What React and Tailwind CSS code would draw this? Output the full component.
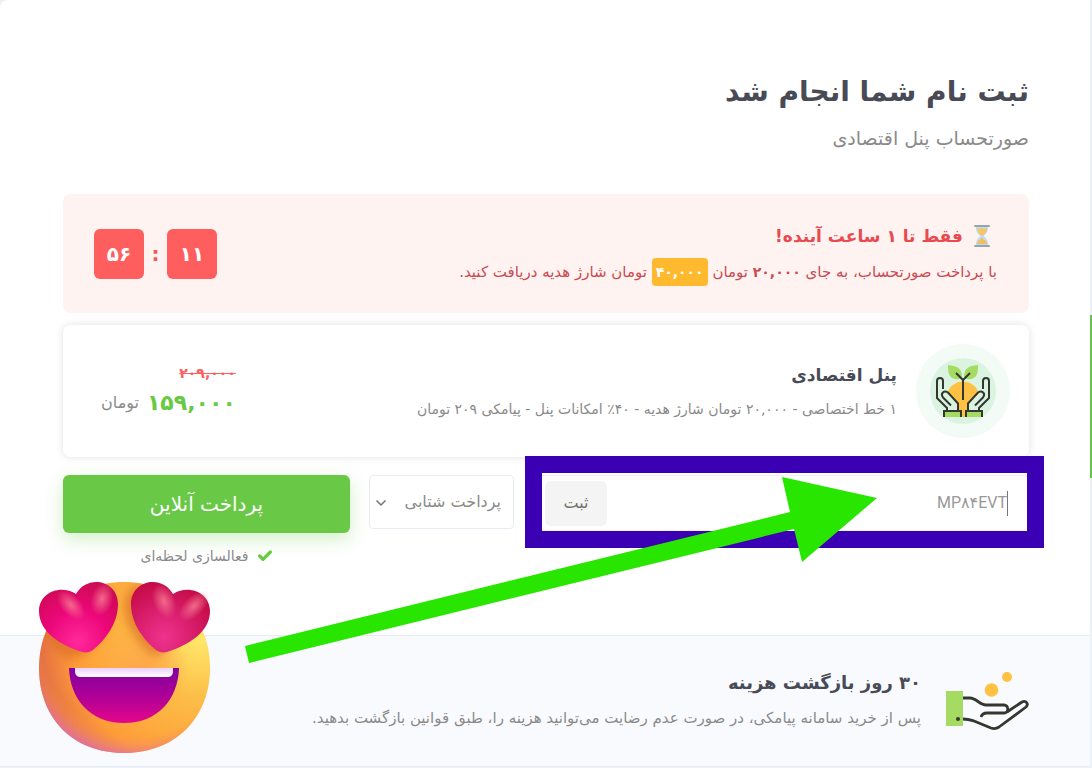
import { useState } from "react";
import { Check, ChevronDown } from "lucide-react";

const Hourglass = () => (
    <svg width="22" height="24" viewBox="0 0 22 24" aria-hidden="true">
        <path d="M5 3h12c0 4-1 6-4.500 9C16 15 17 17 17 21H5c0-4 1-6 4.500-9C6 9 5 7 5 3z" fill="#b9def5" />
        <path d="M6 5c2-1 8-1 10 0-.4 3-2 5-5 7-3-2-4.600-4-5-7z" fill="#f5c566" />
        <path d="M11 13c.5 2 5 3.500 5 7H6c0-3.500 4.500-5 5-7z" fill="#f3bd62" />
        <rect x="3" y="1" width="16" height="2" rx="1" fill="#9aa3a8" />
        <rect x="3" y="21" width="16" height="2" rx="1" fill="#9aa3a8" />
    </svg>
);

const PlanIcon = () => (
    <svg className="shrink-0" width="94" height="94" viewBox="0 0 94 94" aria-hidden="true">
        <circle cx="47" cy="47" r="47" fill="#f2fbf5" />
        <circle cx="47" cy="47" r="33" fill="#dbf4e1" />
        <path d="M31 50A16.500 16.500 0 0 1 63 50C64 58 51 62 51 73h-8C43 62 30 58 31 50z" fill="#ffc143" />
        <path d="M32 21c9 1 14 3 14 12 0 2-8 4-12-1-2-3-2-7-2-11z" fill="#a5db63" />
        <path d="M62 21c-9 1-14 3-14 12 0 2 8 4 12-1 2-3 2-7 2-11z" fill="#a5db63" />
        <path d="M28 67h17v6H28zM50 67h17v6H50z" fill="#a5db63" />
        <path d="M28 66l-7-12V38l6 0v10l2 0 13 10v8zM66 66l7-12V38l-6 0v10l-2 0-13 10v8z" fill="#dbf4e1" />
        <g fill="none" stroke="#32382f" strokeWidth="2">
            <path d="M47 56V36l-7-7M47 36l7-7" />
            <path d="M28 73v-6h17v6M31 67v-3L21 54V37c0-4 6-4 6 0v8M42 67v-7.500L32 48.500c-4-2.500-8 1-5 5l8 8" />
            <path d="M66 73v-6H50v6M63 67v-3l10-10V37c0-4-6-4-6 0v8M52 67v-7.500L62 48.500c4-2.500 8 1 5 5l-8 8" />
        </g>
    </svg>
);

const RefundIcon = () => (
    <svg className="shrink-0" width="84" height="60" viewBox="0 0 84 60" aria-hidden="true">
        <path d="M1 20h17v35H1z" fill="#a5db63" />
        <circle cx="13" cy="48" r="2" fill="#32382f" />
        <circle cx="46.500" cy="19" r="6.800" fill="#ffc143" />
        <circle cx="62" cy="6" r="5" fill="#ffc143" />
        <g fill="none" stroke="#32382f" strokeWidth="2.800" strokeLinejoin="round">
            <path d="M18 27h7c6 0 10 7 16 7h18c5 0 5 8 0 8H42c-3 0-5 1-6 4" />
            <path d="M62 41l15-10c4-2 7 2 4 5L54 56c-3 2-5 2-8 1l-17-7c-3-1-5-2-11-2" />
        </g>
    </svg>
);

const LoveFace = () => (
    <svg className="pointer-events-none absolute left-[38px] top-[581px]" width="173" height="173" viewBox="0 0 173 173" aria-hidden="true">
        <defs>
            <radialGradient id="face" cx="0.94" cy="0.34" r="0.98">
                <stop offset="0" stopColor="#ffe76a" />
                <stop offset="0.35" stopColor="#fcbd47" />
                <stop offset="0.75" stopColor="#ff9d38" />
                <stop offset="1" stopColor="#dd6548" />
            </radialGradient>
            <radialGradient id="chin" gradientUnits="userSpaceOnUse" cx="100" cy="55" r="125">
                <stop offset="0.78" stopColor="#ff9d38" stopOpacity="0" />
                <stop offset="0.97" stopColor="#e070a8" stopOpacity="0.9" />
            </radialGradient>
            <radialGradient id="cheek" gradientUnits="userSpaceOnUse" cx="105" cy="90" r="45">
                <stop offset="0" stopColor="#ffa54b" />
                <stop offset="1" stopColor="#ffa54b" stopOpacity="0" />
            </radialGradient>
            <radialGradient id="heartLeft" gradientUnits="userSpaceOnUse" cx="40" cy="60" r="62">
                <stop offset="0" stopColor="#ff2a9c" />
                <stop offset="0.5" stopColor="#ec077a" />
                <stop offset="1" stopColor="#cc0a50" />
            </radialGradient>
            <radialGradient id="heartRight" gradientUnits="userSpaceOnUse" cx="126" cy="56" r="56">
                <stop offset="0" stopColor="#ef338e" />
                <stop offset="0.5" stopColor="#d91e6d" />
                <stop offset="1" stopColor="#c40a45" />
            </radialGradient>
            <radialGradient id="shine">
                <stop offset="0" stopColor="#f87893" stopOpacity="0.85" />
                <stop offset="1" stopColor="#f87893" stopOpacity="0" />
            </radialGradient>
            <linearGradient id="mouth" x1="0" y1="0" x2="0" y2="1">
                <stop offset="0" stopColor="#8200a0" />
                <stop offset="0.5" stopColor="#ac0096" />
                <stop offset="1" stopColor="#e5068b" />
            </linearGradient>
            <linearGradient id="teeth" x1="0" y1="0" x2="0" y2="1">
                <stop offset="0" stopColor="#eccfff" />
                <stop offset="1" stopColor="#ffffff" />
            </linearGradient>
            <filter id="soft" x="-30%" y="-30%" width="160%" height="160%">
                <feGaussianBlur stdDeviation="5" />
            </filter>
            <clipPath id="head">
                <path d="M86 1C138 1 172 38 172 87s-34 85-86 85S1 136 1 87 34 1 86 1z" />
            </clipPath>
        </defs>
        <g clipPath="url(#head)">
            <rect width="173" height="173" fill="url(#face)" />
            <rect width="173" height="173" fill="url(#cheek)" />
            <rect width="173" height="173" fill="url(#chin)" />
            <g fill="#d96b25" opacity="0.65" filter="url(#soft)">
                <path d="M30 14C48 6 70 2 72 23c0 22-14 42-29 52-5 4-12 3-17 1C14 66 1 52 1 30z" />
                <path d="M131 13C117-6 88 0 86 23c0 22 13 38 25 49 5 4 10 3 16 0z" />
            </g>
        </g>
        <path d="M38 13C49-7 80-1 80 23c0 20-13 36-25 46-4 3-9 3-14 1C24 64 1 52 1 30 1 12 22 3 38 13z" fill="url(#heartLeft)" />
        <path d="M135 13C124-7 93-1 93 23c0 20 13 36 25 46 4 3 9 3 14 1C149 64 172 52 172 30 172 12 151 3 135 13z" fill="url(#heartRight)" />
        <ellipse cx="33" cy="24" rx="10" ry="18" fill="url(#shine)" transform="rotate(-42 33 24)" />
        <ellipse cx="64" cy="18" rx="11" ry="17" fill="url(#shine)" transform="rotate(15 64 18)" />
        <ellipse cx="126" cy="20" rx="11" ry="18" fill="url(#shine)" transform="rotate(-20 126 20)" />
        <ellipse cx="156" cy="25" rx="10" ry="19" fill="url(#shine)" transform="rotate(45 156 25)" />
        <path d="M31 87h110c-1 32-22 55-55 55S32 119 31 87z" fill="url(#mouth)" />
        <path d="M37 87h98v3c0 4-2 6-6 6H43c-4 0-6-2-6-6z" fill="url(#teeth)" />
    </svg>
);

const Arrow = () => (
    <svg className="pointer-events-none absolute left-[245px] top-[477px]" width="633" height="187" viewBox="0 0 633 187" aria-hidden="true">
        <path d="M0 169L545 35 537 0 632 21 557 85 549 52 4 186z" fill="#28e600" />
    </svg>
);

const countdown = ["۱۱", "۵۶"];

export default function App() {
    const [code, setCode] = useState("MP۸۴EVT");
    const [gateway, setGateway] = useState("shetab");

    return (
        <div dir="rtl" className="relative min-h-screen overflow-hidden bg-[#edf1f8] pr-[2px] font-['DejaVu_Sans',sans-serif] text-[#8a8a8a]">
            <div className="absolute right-0 top-[315px] h-[163px] w-[2px] bg-[#67c24c]" />

            <main className="rounded-tl-lg bg-white">
                <div className="pt-[66px] pr-[61px] pb-16 pl-[63px]">
                    <header className="mb-10">
                        <h1 className="text-[28px] leading-[52px] font-bold text-[#484b56]">ثبت نام شما انجام شد</h1>
                        <p className="mt-1 text-[19px] leading-[32px]">صورتحساب پنل اقتصادی</p>
                    </header>

                    <section className="flex min-h-[119px] items-center justify-between rounded-lg bg-[#fff3f2] pr-8 pl-[31px]">
                        <div>
                            <h2 className="flex items-center gap-2 pr-1 text-[17px] leading-[32px] font-bold text-[#e84a4f]">
                                <Hourglass />
                                فقط تا ۱ ساعت آینده!
                            </h2>
                            <p className="mt-1 text-[15px] leading-[32px] text-[#c94b51]">
                                با پرداخت صورتحساب، به جای <strong className="text-[14px]">۲۰,۰۰۰</strong> تومان{" "}
                                <strong className="inline-block rounded bg-[#ffb92e] px-1 text-[14px] leading-[28px] text-white">۴۰,۰۰۰</strong>{" "}
                                تومان شارژ هدیه دریافت کنید.
                            </p>
                        </div>
                        <div className="flex items-center text-[20px] font-bold">
                            <span className="flex size-[50px] items-center justify-center rounded-md bg-[#ff5e5e] text-white">{countdown[0]}</span>
                            <span className="w-[23px] text-center text-[#f05a5a]">:</span>
                            <span className="flex size-[50px] items-center justify-center rounded-md bg-[#ff5e5e] text-white">{countdown[1]}</span>
                        </div>
                    </section>

                    <section className="mt-3 flex min-h-[132px] items-center rounded-lg bg-white pr-[19px] pl-[38px] shadow-[0_0_8px_rgba(0,0,0,0.12)]">
                        <PlanIcon />
                        <div className="mr-[19px] flex-1">
                            <h3 className="text-[17px] leading-[32px] font-bold text-[#484b56]">پنل اقتصادی</h3>
                            <p className="mt-1 text-[14px] leading-[28px]">۱ خط اختصاصی - ۲۰,۰۰۰ تومان شارژ هدیه - ۴۰٪ امکانات پنل - پیامکی ۲۰۹ تومان</p>
                        </div>
                        <div>
                            <del className="block text-[14px] leading-[24px] font-bold text-[#ff5e5e]">۲۰۹,۰۰۰</del>
                            <div className="flex items-center gap-2 leading-[36px]">
                                <strong className="text-[22px] text-[#67c944]">۱۵۹,۰۰۰</strong>
                                <span className="text-[16px]">تومان</span>
                            </div>
                        </div>
                    </section>

                    <form className="mt-[18px] flex items-start" onSubmit={(e) => e.preventDefault()}>
                        <div className="relative flex h-[56px] flex-1 items-center rounded border border-[#edf1f6] pr-5">
                            <span className="h-[25px] w-px bg-[#777777]" />
                            <input
                                aria-label="کد تخفیف"
                                value={code}
                                onChange={(e) => setCode(e.target.value)}
                                className="min-w-0 flex-1 bg-transparent font-['Roboto','DejaVu_Sans',sans-serif] text-[16px] text-[#999999] outline-none"
                            />
                            <button type="submit" className="ml-[11px] h-[45px] w-[62px] rounded-md bg-[#f4f4f4] text-[16px] text-[#707070]">ثبت</button>
                            <div className="pointer-events-none absolute -top-5 -right-4 -bottom-[18px] -left-[9px] border-[17px] border-[#3c00b4]" />
                        </div>
                        <div className="relative mr-[19px] w-[145px]">
                            <select
                                aria-label="روش پرداخت"
                                value={gateway}
                                onChange={(e) => setGateway(e.target.value)}
                                className="h-[54px] w-full appearance-none rounded border border-[#e6ecf3] bg-white pr-3 pl-6 text-[16px] text-[#8a8a8a]"
                            >
                                <option value="shetab">پرداخت شتابی</option>
                            </select>
                            <ChevronDown className="pointer-events-none absolute left-1 top-5 size-4 text-[#777777]" strokeWidth={2.5} />
                        </div>
                        <div className="mr-[19px] w-[287px]">
                            <button type="button" className="h-[58px] w-full rounded-md bg-[#69c946] text-[20px] text-white shadow-[0_6px_18px_rgba(105,201,70,0.3)]">پرداخت آنلاین</button>
                            <p className="mt-2 flex items-center justify-center gap-2 text-[14px] leading-[30px]">
                                <Check className="size-4 text-[#67c944]" strokeWidth={5} />
                                فعالسازی لحظه‌ای
                            </p>
                        </div>
                    </form>
                </div>

                <section className="flex min-h-[132px] items-center border-y border-[#e6ebf4] bg-[#f9fafe] pr-[61px] pl-[63px]">
                    <RefundIcon />
                    <div className="mr-6">
                        <h2 className="text-[18px] leading-[34px] font-bold text-[#484b56]">۳۰ روز بازگشت هزینه</h2>
                        <p className="text-[15px] leading-[36px]">پس از خرید سامانه پیامکی، در صورت عدم رضایت می‌توانید هزینه را، طبق قوانین بازگشت بدهید.</p>
                    </div>
                </section>
            </main>

            <Arrow />
            <LoveFace />
        </div>
    );
}
